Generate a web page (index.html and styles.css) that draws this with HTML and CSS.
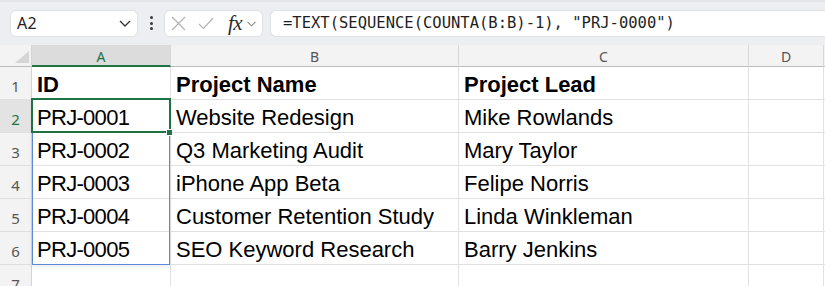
FILE: index.html
```html
<!DOCTYPE html>
<html lang="en">
<head>
<meta charset="utf-8">
<title>Sheet</title>
<link rel="stylesheet" href="styles.css">
</head>
<body>
<div class="app">
  <div class="toolbar">
    <div class="namebox">
      <span class="ref">A2</span>
      <svg class="chev" width="12" height="7" viewBox="0 0 12 7"><path d="M1 1 L6 6 L11 1" fill="none" stroke="#333" stroke-width="1.3"/></svg>
    </div>
    <div class="vdots"><i></i><i></i><i></i></div>
    <div class="fnbtns">
      <svg class="ico" width="15" height="15" viewBox="0 0 15 15"><path d="M1 1 L14 14 M14 1 L1 14" fill="none" stroke="#b3b3b3" stroke-width="1.2"/></svg>
      <svg class="ico" width="16" height="13" viewBox="0 0 16 13"><path d="M1 7 L5.5 11.5 L15 1" fill="none" stroke="#b3b3b3" stroke-width="1.2"/></svg>
      <span class="fx">fx</span>
      <svg class="chev2" width="9" height="6" viewBox="0 0 9 6"><path d="M0.5 0.8 L4.5 4.8 L8.5 0.8" fill="none" stroke="#8a8a8a" stroke-width="1.1"/></svg>
    </div>
    <div class="formula">=TEXT(SEQUENCE(COUNTA(B:B)-1), "PRJ-0000")</div>
  </div>

  <div class="sheet">
    <div class="corner"><span class="tri"></span></div>
    <div class="colhdr sel">A</div>
    <div class="colhdr">B</div>
    <div class="colhdr">C</div>
    <div class="colhdr">D</div>
    <div class="colhdr"></div>

    <div class="rowhdr">1</div>
    <div class="cell bold">ID</div>
    <div class="cell bold">Project Name</div>
    <div class="cell bold">Project Lead</div>
    <div class="cell"></div>
    <div class="cell"></div>

    <div class="rowhdr sel">2</div>
    <div class="cell id">PRJ-0001</div>
    <div class="cell">Website Redesign</div>
    <div class="cell">Mike Rowlands</div>
    <div class="cell"></div>
    <div class="cell"></div>

    <div class="rowhdr">3</div>
    <div class="cell id">PRJ-0002</div>
    <div class="cell">Q3 Marketing Audit</div>
    <div class="cell">Mary Taylor</div>
    <div class="cell"></div>
    <div class="cell"></div>

    <div class="rowhdr">4</div>
    <div class="cell id">PRJ-0003</div>
    <div class="cell">iPhone App Beta</div>
    <div class="cell">Felipe Norris</div>
    <div class="cell"></div>
    <div class="cell"></div>

    <div class="rowhdr">5</div>
    <div class="cell id">PRJ-0004</div>
    <div class="cell">Customer Retention Study</div>
    <div class="cell">Linda Winkleman</div>
    <div class="cell"></div>
    <div class="cell"></div>

    <div class="rowhdr">6</div>
    <div class="cell id">PRJ-0005</div>
    <div class="cell">SEO Keyword Research</div>
    <div class="cell">Barry Jenkins</div>
    <div class="cell"></div>
    <div class="cell"></div>

    <div class="rowhdr">7</div>
    <div class="cell"></div>
    <div class="cell"></div>
    <div class="cell"></div>
    <div class="cell"></div>
    <div class="cell"></div>

    <div class="spill"></div>
    <div class="active"></div>
    <div class="handle"></div>
  </div>
</div>
</body>
</html>
```

FILE: styles.css
```css
* { box-sizing: border-box; }
html, body { margin: 0; padding: 0; }
body {
  width: 825px;
  height: 286px;
  overflow: hidden;
  background: #ffffff;
  font-family: "Liberation Sans", Arial, sans-serif;
}
.app { width: 825px; }

.toolbar {
  height: 45px;
  background: #eceef1;
  border-top: 2px solid #e2e4e8;
  display: flex;
  align-items: center;
  padding: 0 0 1px 10px;
}
.namebox {
  width: 128px;
  height: 27px;
  background: #fff;
  border: 1px solid #dfe1e5;
  border-radius: 6px;
  display: flex;
  align-items: center;
  justify-content: space-between;
  padding: 0 6px 0 6px;
}
.ref {
  font-family: "Noto Sans", sans-serif;
  font-size: 16px;
  color: #222;
  letter-spacing: 0.3px;
}
.chev { margin-top: 1px; }
.vdots {
  width: 26px;
  display: flex;
  flex-direction: column;
  align-items: center;
  gap: 2.5px;
}
.vdots i {
  display: block;
  width: 3px;
  height: 3px;
  border-radius: 50%;
  background: #3a3a3a;
}
.fnbtns {
  width: 99px;
  height: 27px;
  background: #fff;
  border: 1px solid #dfe1e5;
  border-radius: 6px;
  display: flex;
  align-items: center;
  padding: 0 0 0 6px;
}
.fnbtns .ico:first-child { margin-right: 12px; }
.fnbtns .ico:nth-child(2) { margin-right: 14px; }
.fx {
  font-family: "Liberation Serif", "Times New Roman", serif;
  font-style: italic;
  font-size: 21px;
  color: #2b2b2b;
  letter-spacing: -0.5px;
  margin-right: 5px;
  line-height: 1;
}
.chev2 { margin-top: 2px; }
.formula {
  flex: 1;
  height: 27px;
  margin-left: 7px;
  background: #fff;
  border: 1px solid #dfe1e5;
  border-right: none;
  border-radius: 6px 0 0 6px;
  display: flex;
  align-items: center;
  padding-left: 12px;
  font-family: "DejaVu Sans Mono", monospace;
  font-size: 15.5px;
  color: #1f1f1f;
  white-space: nowrap;
  overflow: hidden;
}

.sheet {
  position: relative;
  display: grid;
  grid-template-columns: 32px 139px 288px 290px 75px 1fr;
  grid-template-rows: 22px repeat(7, 33px);
}
.corner {
  background: #f3f3f3;
  border-right: 1px solid #d4d4d4;
  border-bottom: 1px solid #bdbdbd;
  position: relative;
  display: flex;
  justify-content: flex-end;
  align-items: flex-end;
  padding: 0 2px 3px 0;
}
.tri {
  width: 0;
  height: 0;
  border-left: 14px solid transparent;
  border-bottom: 12px solid #d6d6d6;
}
.colhdr {
  background: #f3f3f3;
  border-right: 1px solid #d7d7d7;
  border-bottom: 1px solid #bdbdbd;
  display: flex;
  align-items: center;
  justify-content: center;
  font-family: "Noto Sans", sans-serif;
  font-size: 14px;
  color: #555;
  padding-top: 2px;
}
.colhdr.sel {
  background: #dcdcdc;
  color: #1f7244;
  border-bottom: 2px solid #1f7244;
}
.rowhdr {
  background: #f3f3f3;
  border-right: 1px solid #d4d4d4;
  border-bottom: 1px solid #e0e0e0;
  display: flex;
  align-items: flex-end;
  justify-content: center;
  font-family: "Noto Sans", sans-serif;
  font-size: 15px;
  line-height: 15px;
  color: #555;
  padding-bottom: 5px;
}
.rowhdr.sel {
  background: #e3e3e3;
  color: #1f7244;
}
.cell {
  border-right: 1px solid #e1e1e1;
  border-bottom: 1px solid #e1e1e1;
  display: flex;
  align-items: flex-end;
  padding: 0 0 3px 5px;
  font-size: 22px;
  line-height: 22px;
  color: #000;
  white-space: nowrap;
}
.cell.bold { font-weight: bold; }
.cell.id { letter-spacing: -0.7px; }

.spill {
  position: absolute;
  left: 32px;
  top: 54px;
  width: 138px;
  height: 166px;
  border: 1px solid #5b8bd6;
  box-shadow: 0 2px 4px rgba(0,0,0,0.08);
  pointer-events: none;
}
.active {
  position: absolute;
  left: 31px;
  top: 53px;
  width: 140px;
  height: 35px;
  border: 2px solid #1f7244;
  pointer-events: none;
}
.handle {
  position: absolute;
  left: 166px;
  top: 84px;
  width: 7px;
  height: 7px;
  background: #1f7244;
  border: 1px solid #fff;
}
```
